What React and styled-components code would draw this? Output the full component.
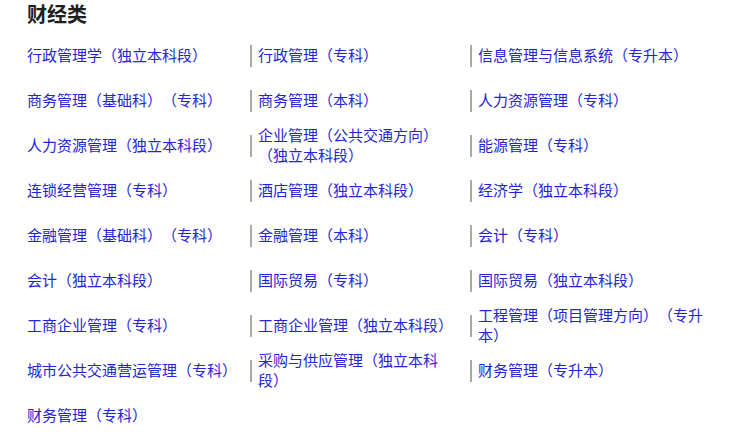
import React from "react";
import styled, { createGlobalStyle } from "styled-components";

const Global = createGlobalStyle`
  html, body { margin: 0; padding: 0; background: #fff; }
  body {
    font-family: "Microsoft YaHei", "Noto Sans CJK SC", "Noto Sans", sans-serif;
    text-spacing-trim: space-all;
  }
`;

const Page = styled.div`
  padding: 0 0 0 27px;
  width: 729px;
  box-sizing: border-box;
`;

const Title = styled.h2`
  margin: 0;
  font-size: 20px;
  line-height: 27px;
  font-weight: bold;
  color: #1f1f1f;
  padding-bottom: 5px;
`;

const List = styled.ul`
  list-style: none;
  margin: 0;
  padding: 0;
  display: grid;
  grid-template-columns: 223px 220px 250px;
  grid-auto-rows: 45px;
  align-items: center;
`;

const Item = styled.li`
  position: relative;
  font-size: 15px;
  line-height: 20px;
  color: #2424d6;
  text-spacing-trim: space-all;
  padding-left: ${(p) => (p.$col === 0 ? "0" : "8px")};
  padding-right: ${(p) => (p.$col === 1 ? "12px" : p.$col === 2 ? "12px" : "0")};
  display: flex;
  align-items: center;
  min-height: 22px;

  &::before {
    content: "";
    display: ${(p) => (p.$col === 0 ? "none" : "block")};
    position: absolute;
    left: 0;
    top: 50%;
    margin-top: -10px;
    width: 2px;
    height: 22px;
    background: #aba9a2;
  }
`;

const Link = styled.a`
  color: inherit;
  text-decoration: none;
`;

const items = [
  "行政管理学（独立本科段）",
  "行政管理（专科）",
  "信息管理与信息系统（专升本）",
  "商务管理（基础科）（专科）",
  "商务管理（本科）",
  "人力资源管理（专科）",
  "人力资源管理（独立本科段）",
  "企业管理（公共交通方向）（独立本科段）",
  "能源管理（专科）",
  "连锁经营管理（专科）",
  "酒店管理（独立本科段）",
  "经济学（独立本科段）",
  "金融管理（基础科）（专科）",
  "金融管理（本科）",
  "会计（专科）",
  "会计（独立本科段）",
  "国际贸易（专科）",
  "国际贸易（独立本科段）",
  "工商企业管理（专科）",
  "工商企业管理（独立本科段）",
  "工程管理（项目管理方向）（专升本）",
  "城市公共交通营运管理（专科）",
  "采购与供应管理（独立本科段）",
  "财务管理（专升本）",
  "财务管理（专科）",
];

export default function App() {
  return (
    <>
      <Global />
      <Page>
        <Title>财经类</Title>
        <List>
          {items.map((t, i) => (
            <Item key={i} $col={i % 3}>
              <Link href="#">{t}</Link>
            </Item>
          ))}
        </List>
      </Page>
    </>
  );
}
